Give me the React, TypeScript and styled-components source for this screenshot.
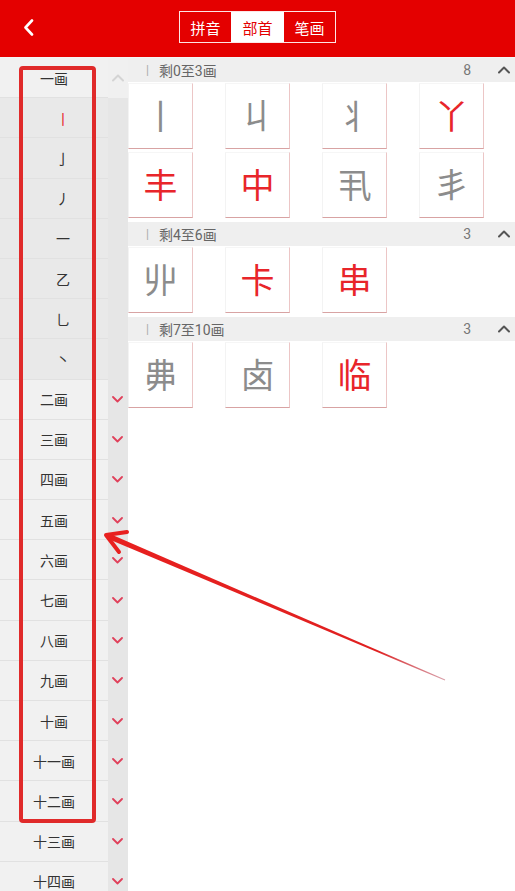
import React from 'react';
import styled, { createGlobalStyle } from 'styled-components';

const GlobalStyle = createGlobalStyle`
  html, body { margin: 0; padding: 0; overflow: hidden; background: #fff; }
  body { font-family: Roboto, "Noto Sans CJK SC", sans-serif; }
  * { box-sizing: border-box; }
`;

const RED = '#e40000';

const Page = styled.div`
  position: relative;
  width: 515px;
  height: 891px;
  overflow: hidden;
  background: #fff;
`;

const TopBar = styled.header`
  height: 57px;
  background: ${RED};
  display: grid;
  grid-template-columns: 1fr auto 1fr;
  align-items: start;
`;

const BackButton = styled.button`
  justify-self: start;
  margin: 18px 0 0 22px;
  width: 12px;
  height: 18px;
  padding: 0;
  border: 0;
  background: transparent;
  display: flex;
  align-items: center;
  justify-content: center;
`;

const Tabs = styled.div`
  margin-top: 11px;
  display: flex;
  height: 32px;
  border: 1px solid rgba(255, 255, 255, 0.9);
`;

const Tab = styled.div<{ $active?: boolean; $w: number }>`
  width: ${p => p.$w}px;
  display: flex;
  align-items: center;
  justify-content: center;
  font-size: 15px;
  font-family: "Noto Sans CJK SC", sans-serif;
  background: ${p => (p.$active ? '#fff' : 'transparent')};
  color: ${p => (p.$active ? RED : '#fff')};
`;

const Main = styled.div`
  display: grid;
  grid-template-columns: 128px 1fr;
  border-top: 1px solid #f4f4f4;
  align-items: start;
`;

const StrokeList = styled.div`
  background: #ececec;
  display: flex;
  flex-direction: column;
`;

const StrokeRow = styled.div`
  display: grid;
  grid-template-columns: 108px 20px;
  height: 40.2px;
`;

const RowLabel = styled.div<{ $sub?: boolean; $active?: boolean }>`
  display: flex;
  align-items: center;
  justify-content: center;
  padding-left: ${p => (p.$sub ? 18 : 0)}px;
  background: ${p => (p.$sub ? '#e9e9e9' : '#f1f1f1')};
  border-bottom: 1px solid #e1e1e1;
  font-family: "Noto Sans CJK SC", sans-serif;
  font-size: 14px;
  color: ${p => (p.$active ? '#e8252a' : '#333')};
`;

const RowToggle = styled.div<{ $light?: boolean }>`
  display: flex;
  align-items: center;
  justify-content: center;
  padding-right: 1px;
  background: ${p => (p.$light ? '#f0f0f0' : '#e6e6e6')};
`;

const Results = styled.div`
  display: flex;
  flex-direction: column;
`;

const SectionHeader = styled.div`
  height: 24px;
  background: #efefef;
  display: flex;
  align-items: center;
  padding-left: 18px;
  font-size: 14px;
  color: #666;
`;

const Pipe = styled.span`
  color: #aaa;
  font-size: 12px;
  margin-right: 10px;
`;

const Count = styled.span`
  margin-left: auto;
  margin-right: 20px;
  color: #777;
`;

const Collapse = styled.span`
  width: 25px;
  display: flex;
  align-items: center;
  justify-content: center;
`;

const CardGrid = styled.div`
  display: grid;
  grid-template-columns: repeat(4, 97px);
  row-gap: 3px;
  padding: 1px 0 4px 0;
`;

const Card = styled.div<{ $red?: boolean }>`
  width: 65px;
  height: 66px;
  background: #fff;
  border-left: 1px solid #f3f3f3;
  border-top: 1px solid #f6f6f6;
  border-right: 1px solid #ecc6c6;
  border-bottom: 1px solid #d8a3a3;
  display: flex;
  align-items: center;
  justify-content: center;
  padding-bottom: 4px;
  font-family: "Noto Sans CJK SC", sans-serif;
  font-size: 34px;
  color: ${p => (p.$red ? '#e8252a' : '#8c8c8c')};
`;

const Highlight = styled.div`
  position: absolute;
  left: 19px;
  top: 66px;
  width: 77px;
  height: 757px;
  border: 4px solid #e02a2a;
  border-radius: 4px;
  pointer-events: none;
`;

const Overlay = styled.svg`
  position: absolute;
  left: 0;
  top: 0;
  pointer-events: none;
`;

const ChevronDown = () => (
  <svg width="11" height="7" viewBox="0 0 11 7">
    <polyline points="1,1 5.5,5.5 10,1" fill="none" stroke="#e0405a" strokeWidth="1.8" strokeLinecap="round" strokeLinejoin="round" />
  </svg>
);

const ChevronUp = ({ color }: { color: string }) => (
  <svg width="12" height="8" viewBox="0 0 12 8">
    <polyline points="1,6.5 6,1.5 11,6.5" fill="none" stroke={color} strokeWidth="2" strokeLinecap="round" strokeLinejoin="round" />
  </svg>
);

type Row = { label: string; sub?: boolean; active?: boolean; open?: boolean };

const rows: Row[] = [
  { label: '一画', open: true },
  { label: '丨', sub: true, active: true },
  { label: '亅', sub: true },
  { label: '丿', sub: true },
  { label: '一', sub: true },
  { label: '乙', sub: true },
  { label: '乚', sub: true },
  { label: '丶', sub: true },
  ...['二画', '三画', '四画', '五画', '六画', '七画', '八画', '九画', '十画', '十一画', '十二画', '十三画', '十四画'].map(l => ({ label: l })),
];

type Section = { title: string; chars: { c: string; red?: boolean }[] };

const sections: Section[] = [
  {
    title: '剩0至3画',
    chars: [
      { c: '丨' }, { c: '丩' }, { c: '丬' }, { c: '丫', red: true },
      { c: '丰', red: true }, { c: '中', red: true }, { c: '丮' }, { c: '丯' },
    ],
  },
  { title: '剩4至6画', chars: [{ c: '丱' }, { c: '卡', red: true }, { c: '串', red: true }] },
  { title: '剩7至10画', chars: [{ c: '丳' }, { c: '卤' }, { c: '临', red: true }] },
];

export default function App() {
  return (
    <Page>
      <GlobalStyle />
      <TopBar>
        <BackButton aria-label="返回">
          <svg width="11" height="17" viewBox="0 0 11 17">
            <polyline points="9,1.5 2.5,8.5 9,15.5" fill="none" stroke="#fff" strokeWidth="2.6" strokeLinecap="round" strokeLinejoin="round" />
          </svg>
        </BackButton>
        <Tabs>
          <Tab $w={51}>拼音</Tab>
          <Tab $w={53} $active>部首</Tab>
          <Tab $w={51}>笔画</Tab>
        </Tabs>
      </TopBar>
      <Main>
        <StrokeList>
          {rows.map((r, i) => (
            <StrokeRow key={i}>
              <RowLabel $sub={r.sub} $active={r.active}>{r.label}</RowLabel>
              <RowToggle $light={r.open}>
                {r.open ? <ChevronUp color="#d4d4d4" /> : r.sub ? null : <ChevronDown />}
              </RowToggle>
            </StrokeRow>
          ))}
        </StrokeList>
        <Results>
          {sections.map(s => (
            <div key={s.title}>
              <SectionHeader>
                <Pipe>|</Pipe>
                <span>{s.title}</span>
                <Count>{s.chars.length}</Count>
                <Collapse><ChevronUp color="#555" /></Collapse>
              </SectionHeader>
              <CardGrid>
                {s.chars.map(ch => (
                  <Card key={ch.c} $red={ch.red}>{ch.c}</Card>
                ))}
              </CardGrid>
            </div>
          ))}
        </Results>
      </Main>
      <Highlight />
      <Overlay width="515" height="891" viewBox="0 0 515 891">
        <defs>
          <linearGradient id="fade" x1="105" y1="535" x2="445" y2="680" gradientUnits="userSpaceOnUse">
            <stop offset="0" stopColor="#e8201f" />
            <stop offset="0.8" stopColor="#e02020" />
            <stop offset="1" stopColor="#c06070" stopOpacity="0.6" />
          </linearGradient>
        </defs>
        <polygon points="107,538.5 109,533.5 445.2,679.6 444.8,680.4" fill="url(#fade)" />
        <polyline points="127,532 106,535 119,552" fill="none" stroke="#e8201f" strokeWidth="4" strokeLinecap="round" strokeLinejoin="round" />
      </Overlay>
    </Page>
  );
}
